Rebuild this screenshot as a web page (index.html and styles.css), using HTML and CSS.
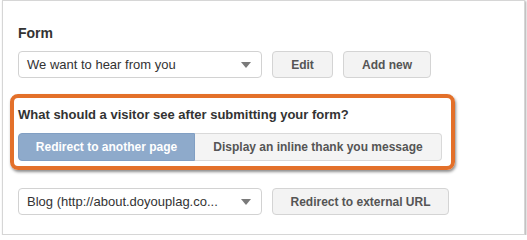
FILE: index.html
```html
<!DOCTYPE html>
<html>
<head>
<meta charset="utf-8">
<link rel="stylesheet" href="styles.css">
</head>
<body>
<div class="panel">
  <div class="label">Form</div>
  <div class="row">
    <div class="select">
      <span class="select-text">We want to hear from you</span>
      <svg class="caret" width="10" height="6" viewBox="0 0 10 6"><path d="M0 0H10L5 6Z" fill="#7a7a7a"/></svg>
    </div>
    <button class="btn btn-edit">Edit</button>
    <button class="btn btn-add">Add new</button>
  </div>
  <div class="highlight">
    <div class="question">What should a visitor see after submitting your form?</div>
    <div class="toggle">
      <button class="toggle-btn active">Redirect to another page</button>
      <button class="toggle-btn">Display an inline thank you message</button>
    </div>
  </div>
  <div class="row row-bottom">
    <div class="select">
      <span class="select-text">Blog (http://about.doyouplag.co...</span>
      <svg class="caret" width="10" height="6" viewBox="0 0 10 6"><path d="M0 0H10L5 6Z" fill="#7a7a7a"/></svg>
    </div>
    <button class="btn btn-url">Redirect to external URL</button>
  </div>
</div>
</body>
</html>
```
FILE: styles.css
```css
html, body {
  margin: 0;
  padding: 0;
  background: #ffffff;
}
body {
  font-family: "Liberation Sans", Arial, sans-serif;
  color: #333333;
}
.panel {
  box-sizing: border-box;
  margin-left: 2px;
  width: 523px;
  height: 235px;
  border: 1px solid #d6d6d6;
  box-shadow: 1px 1px 2px rgba(0, 0, 0, 0.35);
  padding: 24px 15px 0 15px;
}
.label {
  font-size: 14px;
  font-weight: bold;
  line-height: 17px;
  color: #333333;
  margin-bottom: 9px;
}
.row {
  display: flex;
  align-items: center;
  gap: 10px;
}
.select {
  box-sizing: border-box;
  width: 244px;
  height: 27px;
  border: 1px solid #d2d2d2;
  border-radius: 4px;
  background: #ffffff;
  display: flex;
  align-items: center;
  justify-content: space-between;
  padding: 0 10px 0 8px;
}
.select-text {
  font-size: 13px;
  color: #333333;
  white-space: nowrap;
}
.caret {
  display: block;
}
.btn {
  box-sizing: border-box;
  height: 27px;
  padding: 0;
  border: 1px solid #d4d4d4;
  border-radius: 4px;
  background: #f3f3f3;
  font-family: "Liberation Sans", Arial, sans-serif;
  font-size: 12px;
  font-weight: bold;
  color: #555555;
  margin: 0;
  white-space: nowrap;
  text-align: center;
}
.btn-edit {
  width: 61px;
}
.btn-add {
  width: 88px;
}
.btn-url {
  width: 177px;
}
.highlight {
  box-sizing: border-box;
  width: 445px;
  margin: 16px 0 0 -8px;
  border: 4px solid #e3702a;
  border-radius: 8px;
  padding: 9px 9px 5px 4px;
  box-shadow: 1px 2px 3px rgba(0, 0, 0, 0.45);
}
.question {
  font-size: 13px;
  font-weight: bold;
  line-height: 16px;
  color: #333333;
  margin-bottom: 10px;
  white-space: nowrap;
}
.toggle {
  display: flex;
}
.toggle-btn {
  box-sizing: border-box;
  height: 28px;
  margin: 0;
  padding: 0;
  border: 1px solid #d9d9d9;
  border-left: none;
  background: #f4f4f4;
  font-family: "Liberation Sans", Arial, sans-serif;
  font-size: 12px;
  font-weight: bold;
  color: #555555;
  width: 247px;
  border-radius: 0 4px 4px 0;
  white-space: nowrap;
  text-align: center;
}
.toggle-btn.active {
  width: 177px;
  background: #8eaacb;
  border: 1px solid #819fc3;
  color: #ffffff;
  border-radius: 4px 0 0 4px;
}
.row-bottom {
  margin-top: 18px;
}
```
